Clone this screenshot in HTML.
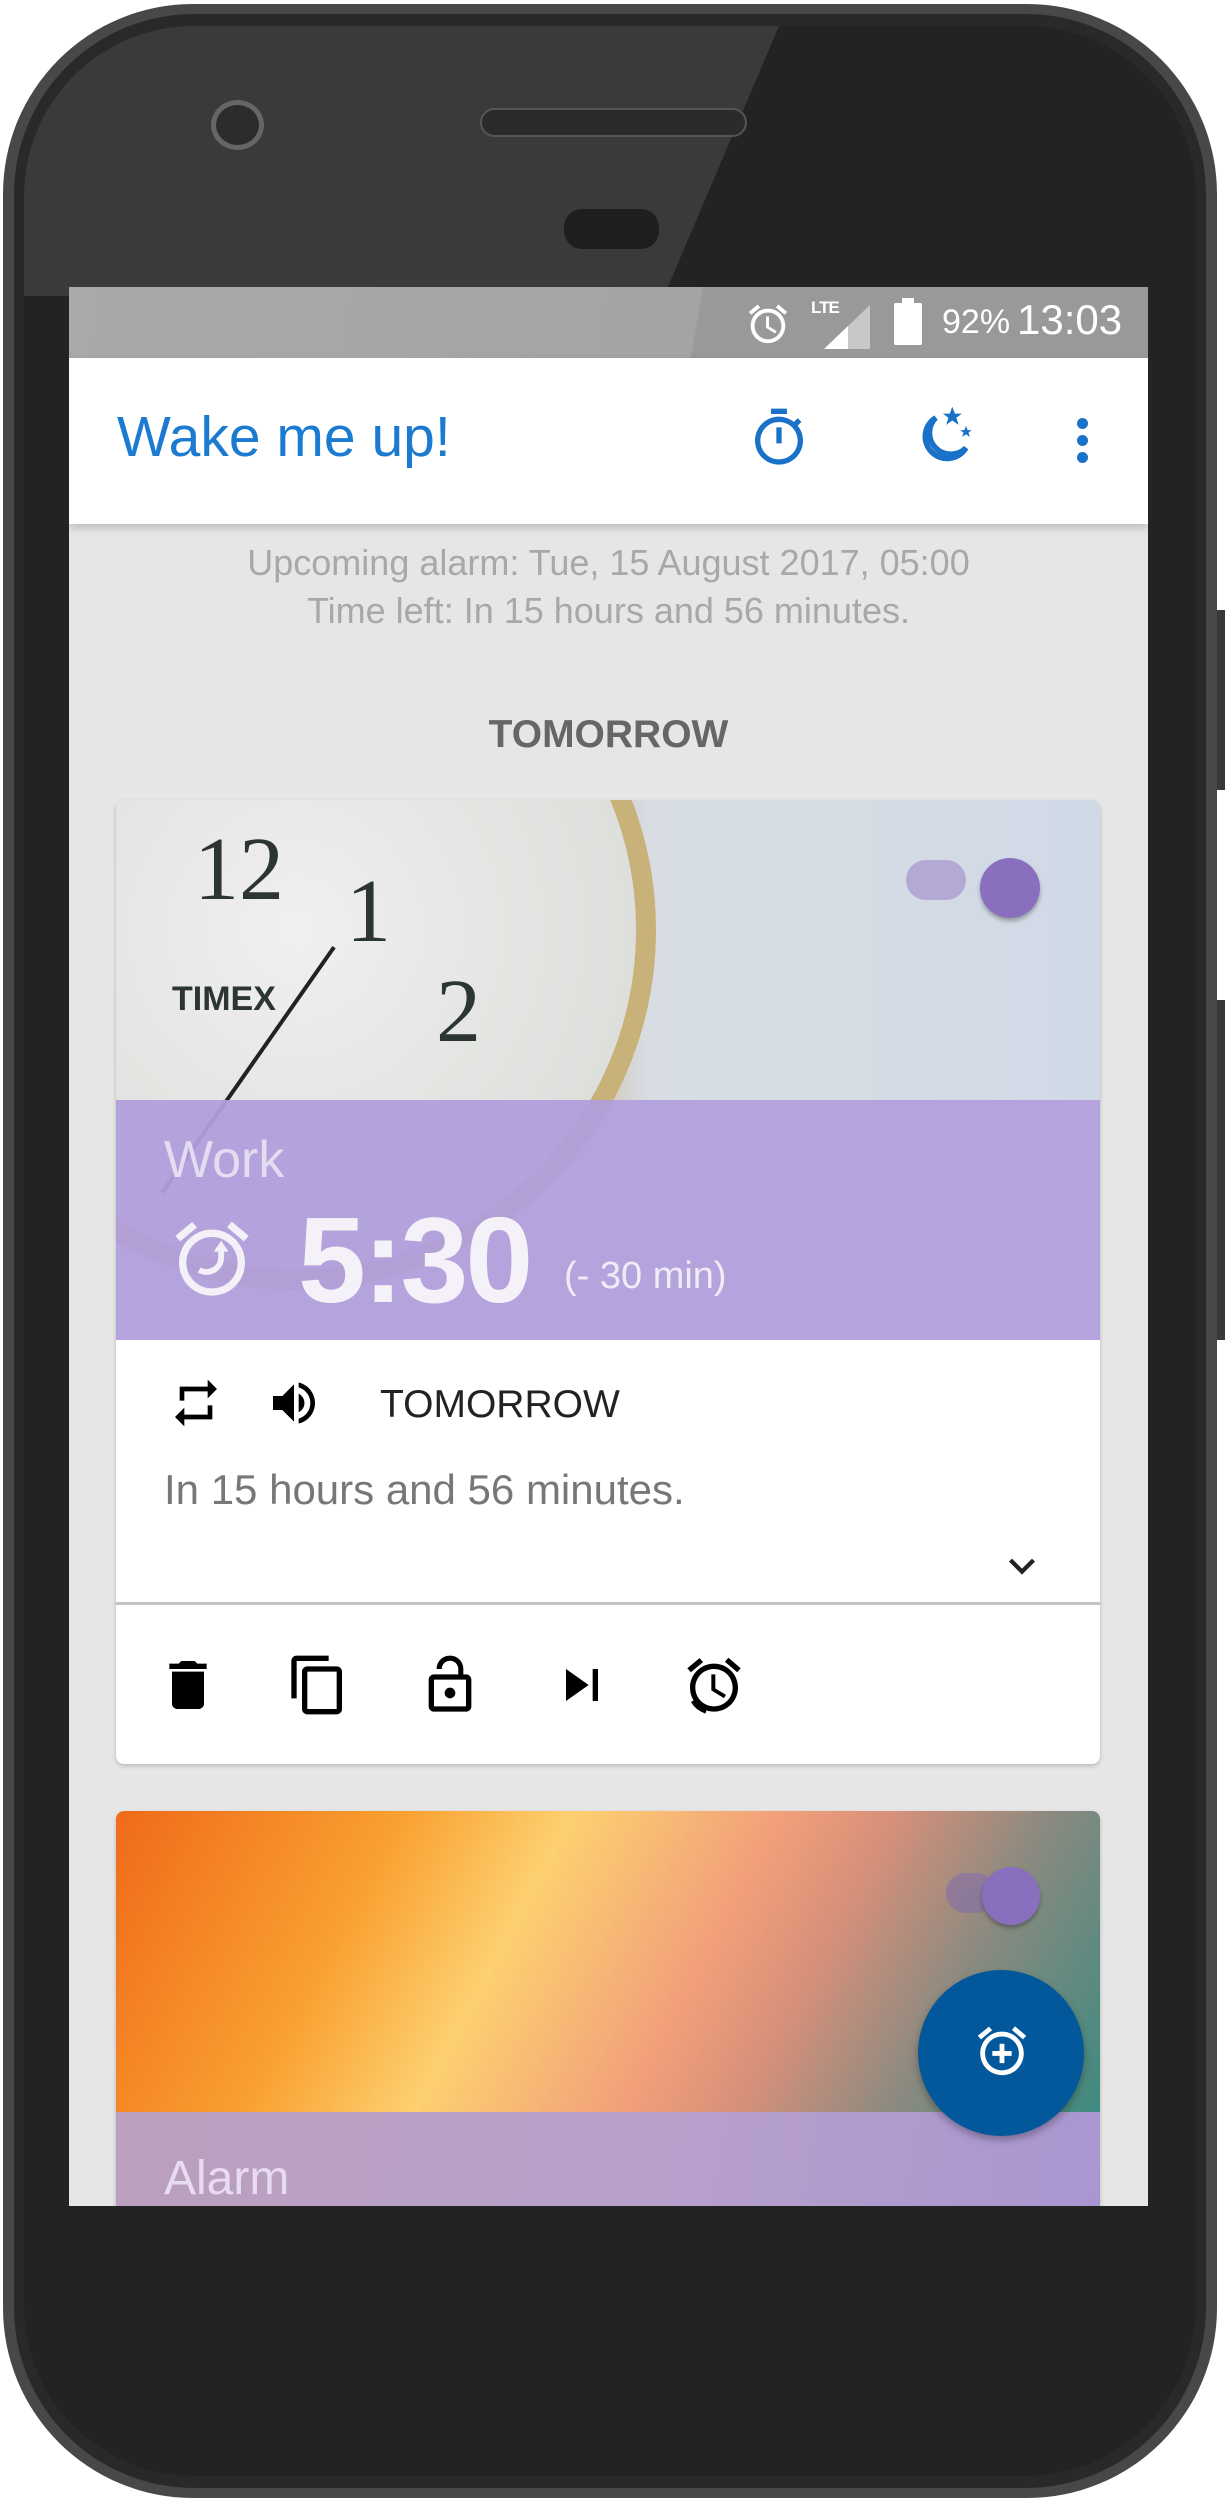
<!DOCTYPE html>
<html><head><meta charset="utf-8"><style>
*{margin:0;padding:0;box-sizing:border-box}
body{width:1226px;height:2502px;background:#fff;position:relative;overflow:hidden;font-family:"Liberation Sans",sans-serif}
.phone{position:absolute;left:3px;top:4px;width:1214px;height:2494px;border-radius:190px;background:#4a4846;}
.phone2{position:absolute;left:14px;top:14px;width:1192px;height:2474px;border-radius:180px;background:#2a2928;}
.face{position:absolute;left:24px;top:26px;width:1172px;height:2450px;border-radius:170px;background:#242323;overflow:hidden}
.hl{position:absolute;left:0;top:0;width:1172px;height:270px;background:#3b3a3a;clip-path:polygon(0 0,755px 0,640px 270px,0 270px)}
.screen{position:absolute;left:69px;top:287px;width:1079px;height:1919px;background:#e6e6e6;overflow:hidden}
.abs{position:absolute}
.status{left:0;top:0;width:1079px;height:71px;background:linear-gradient(100deg,#a9a9a9 0,#a4a4a4 58%,#999 58.2%)}
.appbar{left:0;top:71px;width:1079px;height:166px;background:#fff;box-shadow:0 4px 8px rgba(0,0,0,.18)}
.card{background:#fff;border-radius:8px;box-shadow:0 2px 4px rgba(0,0,0,.2);overflow:hidden}
</style></head><body>
<div class="phone"></div><div class="phone2"></div>
<div class="face"><div class="hl"></div></div>
<div class="abs" style="left:480px;top:108px;width:267px;height:29px;border-radius:15px;background:#2c2b2b;border:2px solid #555"></div>
<div class="abs" style="left:211px;top:100px;width:53px;height:50px;border-radius:50%;background:#2d2c2c;border:5px solid #666"></div>
<div class="abs" style="left:564px;top:209px;width:95px;height:40px;border-radius:18px;background:#1f1e1e"></div>
<div class="abs" style="left:1217px;top:610px;width:8px;height:180px;background:#3a3938"></div>
<div class="abs" style="left:1217px;top:1000px;width:8px;height:340px;background:#3a3938"></div>

<div class="screen">
 <div class="abs status">
  <svg class="abs" style="left:676px;top:14px" width="46" height="46" viewBox="0 0 24 24"><path fill="#fff" d="M22 5.7l-4.6-3.9-1.3 1.5 4.6 3.9L22 5.7zM7.9 3.4L6.6 1.9 2 5.7l1.3 1.5 4.6-3.8zM12.5 8H11v6l4.7 2.9.8-1.2-4-2.4V8zM12 4c-5 0-9 4-9 9s4 9 9 9 9-4 9-9-4-9-9-9zm0 16c-3.9 0-7-3.1-7-7s3.1-7 7-7 7 3.1 7 7-3.1 7-7 7z"/></svg>
  <div class="abs" style="left:742px;top:11px;color:#fff;font-size:17px;font-weight:bold;letter-spacing:-1px">LTE</div>
  <svg class="abs" style="left:755px;top:18px" width="46" height="44"><polygon points="0,44 46,0 46,44" fill="#c8c8c8"/><polygon points="0,44 24,21 24,44" fill="#fff"/></svg>
  <div class="abs" style="left:825px;top:16px;width:28px;height:42px;background:#fff;border-radius:2px"></div>
  <div class="abs" style="left:833px;top:11px;width:12px;height:6px;background:#fff"></div>
  <div class="abs" style="left:873px;top:16px;color:#fff;font-size:34px">92%</div>
  <div class="abs" style="left:948px;top:9px;color:#fff;font-size:42px">13:03</div>
 </div>
 <div class="abs appbar">
  <div class="abs" style="left:48px;top:46px;font-size:57px;color:#1a7bd0">Wake me up!</div>
  <svg class="abs" style="left:678px;top:48px" width="64" height="64" viewBox="0 0 24 24"><path fill="#1a72c8" d="M15 1H9v2h6V1zm-4 13h2V8h-2v6zm8-6.6l1.4-1.4c-.4-.5-.9-1-1.4-1.4L17.6 6c-1.6-1.2-3.5-2-5.6-2-5 0-9 4-9 9s4 9 9 9 9-4 9-9c0-2.1-.7-4.1-2-5.6zM12 20c-3.9 0-7-3.1-7-7s3.1-7 7-7 7 3.1 7 7-3.1 7-7 7z"/></svg>
  <svg class="abs" style="left:842px;top:46px" width="66" height="66" viewBox="0 0 24 24"><path fill="none" stroke="#1a72c8" stroke-width="2" d="M9 5a8 8 0 1 0 11 11A7 7 0 0 1 9 5z"/><path fill="#1a72c8" d="M15 1l1 2.5h2.5l-2 1.5.8 2.6L15 6l-2.2 1.6.8-2.6-2-1.5h2.5zM20 8l.6 1.5h1.5l-1.2.9.5 1.6-1.4-1-1.4 1 .5-1.6-1.2-.9h1.5z"/></svg>
  <div class="abs" style="left:1008px;top:60px;width:11px;height:11px;border-radius:50%;background:#1a72c8;box-shadow:0 17px 0 #1a72c8,0 34px 0 #1a72c8"></div>
 </div>
 <div class="abs" style="left:0;top:252px;width:1079px;text-align:center;color:#a8a8a8;font-size:36px;line-height:48px">Upcoming alarm: Tue, 15 August 2017, 05:00<br>Time left: In 15 hours and 56 minutes.</div>
 <div class="abs" style="left:0;top:426px;width:1079px;text-align:center;color:#666;font-size:39px;font-weight:bold">TOMORROW</div>

 <div class="abs card" style="left:47px;top:513px;width:984px;height:964px">
  <div class="abs" style="left:0;top:0;width:984px;height:300px;background:linear-gradient(90deg,#dde0dc 0,#e4e4e0 38%,#c9b786 44%,#d7dde3 54%,#d0dae6 100%)"></div>
  <div class="abs" style="left:-180px;top:-230px;width:720px;height:720px;border-radius:50%;border:20px solid #c9b27a;background:radial-gradient(#f0f0ee,#d5d8d4)"></div>
  <div class="abs" style="left:78px;top:18px;font-size:90px;font-family:'Liberation Serif',serif;color:#2b3532">12</div>
  <div class="abs" style="left:230px;top:60px;font-size:90px;font-family:'Liberation Serif',serif;color:#2b3532">1</div>
  <div class="abs" style="left:320px;top:160px;font-size:90px;font-family:'Liberation Serif',serif;color:#2b3532">2</div>
  <div class="abs" style="left:56px;top:180px;font-size:34px;font-weight:bold;color:#2b3532">TIMEX</div>
  <div class="abs" style="left:130px;top:120px;width:4px;height:300px;background:#222;transform:rotate(35deg)"></div>
  <div class="abs" style="left:790px;top:60px;width:60px;height:40px;border-radius:20px;background:#b3a9d4"></div>
  <div class="abs" style="left:864px;top:58px;width:60px;height:60px;border-radius:50%;background:#8a6fbf;box-shadow:0 3px 4px rgba(0,0,0,.3)"></div>
  <div class="abs" style="left:0;top:300px;width:984px;height:240px;background:rgba(176,158,218,.95)"></div>
  <div class="abs" style="left:48px;top:330px;font-size:52px;color:#e4dcf0">Work</div>
  <svg class="abs" style="left:52px;top:415px" width="88" height="88" viewBox="0 0 24 24"><path fill="#f3f0f8" d="M22 5.7l-4.6-3.9-1.3 1.5 4.6 3.9L22 5.7zM7.9 3.4L6.6 1.9 2 5.7l1.3 1.5 4.6-3.8zM12 4c-5 0-9 4-9 9s4 9 9 9 9-4 9-9-4-9-9-9zm0 16c-3.9 0-7-3.1-7-7s3.1-7 7-7 7 3.1 7 7-3.1 7-7 7z"/><path fill="none" stroke="#f3f0f8" stroke-width="1.6" d="M8.5 15a4 4 0 0 0 6-3.5V9"/><path fill="#f3f0f8" d="M12.5 10l2-3 2 3z"/></svg>
  <div class="abs" style="left:182px;top:390px;font-size:122px;font-weight:bold;color:#f4f2f8;letter-spacing:-3px">5:30</div>
  <div class="abs" style="left:448px;top:455px;font-size:38px;color:#f0ecf6">(- 30 min)</div>
  <svg class="abs" style="left:52px;top:575px" width="56" height="56" viewBox="0 0 24 24"><path d="M7 7h10v3l4-4-4-4v3H5v6h2V7zm10 10H7v-3l-4 4 4 4v-3h12v-6h-2v4z"/></svg>
  <svg class="abs" style="left:150px;top:575px" width="56" height="56" viewBox="0 0 24 24"><path d="M3 9v6h4l5 5V4L7 9H3zm13.5 3A4.5 4.5 0 0 0 14 8v8a4.5 4.5 0 0 0 2.5-4zM14 3.2v2.1c2.9.9 5 3.5 5 6.7s-2.1 5.8-5 6.7v2.1c4-.9 7-4.5 7-8.8s-3-7.9-7-8.8z"/></svg>
  <div class="abs" style="left:264px;top:583px;font-size:39px;color:#222">TOMORROW</div>
  <div class="abs" style="left:48px;top:666px;font-size:42px;color:#777">In 15 hours and 56 minutes.</div>
  <svg class="abs" style="left:880px;top:740px" width="52" height="52" viewBox="0 0 24 24"><path d="M7.4 8.6L12 13.2l4.6-4.6L18 10l-6 6-6-6z" fill="#222"/></svg>
  <div class="abs" style="left:0;top:802px;width:984px;height:3px;background:#c4c4c4"></div>
  <svg class="abs" style="left:40px;top:853px" width="64" height="64" viewBox="0 0 24 24"><path d="M6 19c0 1.1.9 2 2 2h8c1.1 0 2-.9 2-2V7H6v12zM19 4h-3.5l-1-1h-5l-1 1H5v2h14V4z"/></svg>
  <svg class="abs" style="left:170px;top:853px" width="64" height="64" viewBox="0 0 24 24"><path d="M16 1H4c-1.1 0-2 .9-2 2v14h2V3h12V1zm3 4H8c-1.1 0-2 .9-2 2v14c0 1.1.9 2 2 2h11c1.1 0 2-.9 2-2V7c0-1.1-.9-2-2-2zm0 16H8V7h11v14z"/></svg>
  <svg class="abs" style="left:302px;top:853px" width="64" height="64" viewBox="0 0 24 24"><path d="M12 17c1.1 0 2-.9 2-2s-.9-2-2-2-2 .9-2 2 .9 2 2 2zm6-9h-1V6c0-2.8-2.2-5-5-5S7 3.2 7 6h1.9c0-1.7 1.4-3.1 3.1-3.1 1.700 0 3.1 1.4 3.1 3.1v2H6c-1.1 0-2 .9-2 2v10c0 1.1.9 2 2 2h12c1.1 0 2-.9 2-2V10c0-1.1-.9-2-2-2zm0 12H6V10h12v10z"/></svg>
  <svg class="abs" style="left:434px;top:853px" width="64" height="64" viewBox="0 0 24 24"><path d="M6 18l8.5-6L6 6v12zM16 6v12h2V6h-2z"/></svg>
  <svg class="abs" style="left:566px;top:853px" width="64" height="64" viewBox="0 0 24 24"><path d="M22 5.7l-4.6-3.9-1.3 1.5 4.6 3.9L22 5.7zM7.9 3.4L6.6 1.9 2 5.7l1.3 1.5 4.6-3.8zM12.5 8H11v6l4.7 2.9.8-1.2-4-2.4V8zM12 4c-5 0-9 4-9 9s4 9 9 9 9-4 9-9-4-9-9-9zm0 16c-3.9 0-7-3.1-7-7s3.1-7 7-7 7 3.1 7 7-3.1 7-7 7z"/><path fill="none" stroke="#000" stroke-width="1.5" d="M4 18a9 9 0 0 0 5 4"/></svg>
 </div>

 <div class="abs card" style="left:47px;top:1524px;width:984px;height:420px;border-radius:8px 8px 0 0">
  <div class="abs" style="left:0;top:0;width:984px;height:301px;background:linear-gradient(118deg,#f06a1a 0,#f9a030 25%,#fdd070 40%,#f2a07a 58%,#d8907a 68%,#8a8a80 82%,#3e8a80 100%)"></div>
  <div class="abs" style="left:830px;top:62px;width:50px;height:40px;border-radius:20px;background:rgba(130,110,170,.6)"></div>
  <div class="abs" style="left:866px;top:56px;width:58px;height:58px;border-radius:50%;background:#8a6fbf;box-shadow:0 3px 4px rgba(0,0,0,.3)"></div>
  <div class="abs" style="left:0;top:301px;width:984px;height:130px;background:linear-gradient(100deg,#bba0bd,#b69fcc 60%,#a996d0)"></div>
  <div class="abs" style="left:48px;top:340px;font-size:48px;color:#eadcf0">Alarm</div>
 </div>
 <div class="abs" style="left:849px;top:1683px;width:166px;height:166px;border-radius:50%;background:#03589b;box-shadow:0 4px 8px rgba(0,0,0,.3)"></div>
 <svg class="abs" style="left:904px;top:1735px" width="58" height="58" viewBox="0 0 24 24"><path fill="#fff" d="M7.9 3.4L6.6 1.9 2 5.7l1.3 1.5 4.6-3.8zM22 5.7l-4.6-3.9-1.3 1.5 4.6 3.9L22 5.7zM12 4c-5 0-9 4-9 9s4 9 9 9 9-4 9-9-4-9-9-9zm0 16c-3.9 0-7-3.1-7-7s3.1-7 7-7 7 3.1 7 7-3.1 7-7 7zm1-11h-2v3H8v2h3v3h2v-3h3v-2h-3V9z"/></svg>
</div>
</body></html>
